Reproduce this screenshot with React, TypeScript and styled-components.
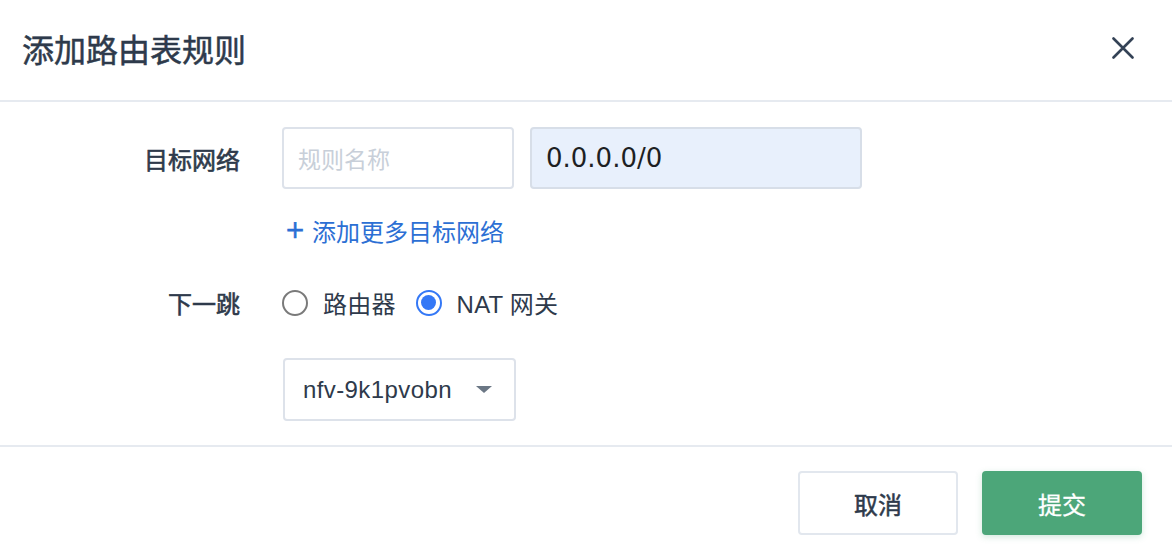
import styled, { createGlobalStyle } from "styled-components";

const GlobalStyle = createGlobalStyle`
  html, body {
    margin: 0;
    padding: 0;
    background: #ffffff;
  }
  body {
    font-family: "Liberation Sans", "Noto Sans CJK SC", sans-serif;
    color: #2e3a4b;
  }
  * {
    box-sizing: border-box;
  }
`;

export default function App() {
  return (
    <>
      <GlobalStyle />
      <Dialog>
        <Header>
          <Title>添加路由表规则</Title>
          <CloseButton aria-label="关闭">
            <svg width="22" height="22" viewBox="0 0 22 22">
              <path
                d="M1.5 1.5 L20.5 20.5 M20.5 1.5 L1.5 20.5"
                stroke="#344256"
                strokeWidth="2.6"
                strokeLinecap="round"
              />
            </svg>
          </CloseButton>
        </Header>

        <Body>
          <FormRow>
            <Label>目标网络</Label>
            <Fields>
              <TextInput placeholder="规则名称" readOnly />
              <CidrInput value="0.0.0.0/0" readOnly />
            </Fields>
          </FormRow>

          <LinkRow>
            <AddLink>
              <Plus>+</Plus>添加更多目标网络
            </AddLink>
          </LinkRow>

          <RadioRow>
            <Label>下一跳</Label>
            <RadioGroup>
              <RadioOption>
                <RadioCircle />
                路由器
              </RadioOption>
              <RadioOption>
                <RadioCircle $checked />
                NAT 网关
              </RadioOption>
            </RadioGroup>
          </RadioRow>

          <SelectRow>
            <Select>
              <span>nfv-9k1pvobn</span>
              <Caret />
            </Select>
          </SelectRow>
        </Body>

        <Footer>
          <Button>取消</Button>
          <Button $primary>提交</Button>
        </Footer>
      </Dialog>
    </>
  );
}

const Dialog = styled.div`
  width: 1172px;
  height: 552px;
  display: flex;
  flex-direction: column;
  background: #ffffff;
`;

const Header = styled.div`
  height: 102px;
  padding: 0 38px 4px 22px;
  display: flex;
  align-items: center;
  justify-content: space-between;
  border-bottom: 2px solid #e6eaf0;
`;

const Title = styled.h1`
  margin: 0;
  font-family: "Noto Sans CJK SC", sans-serif;
  font-size: 32px;
  font-weight: 400;
  -webkit-text-stroke: 0.5px #2e3a4b;
  color: #2e3a4b;
`;

const CloseButton = styled.button`
  border: none;
  background: none;
  padding: 0;
  width: 22px;
  height: 22px;
  display: flex;
  cursor: pointer;
`;

const Body = styled.div`
  padding: 25px 0 24px;
  border-bottom: 2px solid #e6eaf0;
`;

const FormRow = styled.div`
  display: grid;
  grid-template-columns: 240px auto;
  column-gap: 42px;
  align-items: center;
`;

const Label = styled.div`
  text-align: right;
  font-family: "Noto Sans CJK SC", sans-serif;
  font-size: 24px;
  font-weight: 400;
  -webkit-text-stroke: 0.6px #2e3a4b;
  color: #2e3a4b;
`;

const Fields = styled.div`
  display: flex;
  gap: 16px;
`;

const TextInput = styled.input`
  width: 232px;
  height: 62px;
  padding: 0 14px;
  border: 2px solid #dde2ea;
  border-radius: 4px;
  background: #ffffff;
  font-family: "Noto Sans CJK SC", sans-serif;
  font-size: 23px;
  outline: none;
  &::placeholder {
    color: #c8cfd9;
  }
`;

const CidrInput = styled(TextInput)`
  width: 332px;
  background: #e8f0fc;
  border-color: #d7dee8;
  font-family: "DejaVu Sans", sans-serif;
  font-size: 26px;
  color: #1d1f23;
`;

const LinkRow = styled.div`
  padding-left: 285px;
  margin-top: 24px;
  height: 34px;
  display: flex;
  align-items: center;
`;

const AddLink = styled.a`
  display: flex;
  align-items: center;
  font-family: "Noto Sans CJK SC", sans-serif;
  font-size: 24px;
  color: #2c6fd4;
  cursor: pointer;
`;

const Plus = styled.span`
  font-family: "DejaVu Sans", sans-serif;
  font-size: 24px;
  font-weight: 400;
  -webkit-text-stroke: 0.6px #2c6fd4;
  margin-right: 7px;
  line-height: 1;
`;

const RadioRow = styled(FormRow)`
  margin-top: 38px;
  height: 34px;
`;

const RadioGroup = styled.div`
  display: flex;
  align-items: center;
  gap: 20px;
`;

const RadioOption = styled.label`
  display: flex;
  align-items: center;
  gap: 15px;
  font-family: "Liberation Sans", "Noto Sans CJK SC", sans-serif;
  font-size: 24px;
  letter-spacing: 0.2px;
  color: #2e3a4b;
  cursor: pointer;
`;

const RadioCircle = styled.span<{ $checked?: boolean }>`
  width: 26px;
  height: 26px;
  border-radius: 50%;
  border: 2px solid ${(p) => (p.$checked ? "#3478f6" : "#7a7a7a")};
  background: #ffffff;
  display: flex;
  align-items: center;
  justify-content: center;
  &::after {
    content: "";
    width: 15px;
    height: 15px;
    border-radius: 50%;
    background: ${(p) => (p.$checked ? "#3478f6" : "transparent")};
  }
`;

const SelectRow = styled.div`
  padding-left: 283px;
  margin-top: 39px;
`;

const Select = styled.div`
  width: 233px;
  height: 63px;
  padding: 0 22px 0 18px;
  display: flex;
  align-items: center;
  justify-content: space-between;
  border: 2px solid #dde2ea;
  border-radius: 4px;
  font-family: "Liberation Sans", sans-serif;
  font-size: 24px;
  letter-spacing: 0.4px;
  color: #2e3a4b;
`;

const Caret = styled.span`
  width: 0;
  height: 0;
  border-left: 8px solid transparent;
  border-right: 8px solid transparent;
  border-top: 7px solid #6b7785;
`;

const Footer = styled.div`
  flex: 1;
  display: flex;
  justify-content: flex-end;
  align-items: flex-start;
  gap: 24px;
  padding: 24px 30px 0 0;
`;

const Button = styled.button<{ $primary?: boolean }>`
  width: 160px;
  height: 64px;
  border-radius: 4px;
  border: 2px solid ${(p) => (p.$primary ? "#4ca679" : "#e2e7ee")};
  background: ${(p) => (p.$primary ? "#4ca679" : "#ffffff")};
  color: ${(p) => (p.$primary ? "#ffffff" : "#2e3a4b")};
  box-shadow: ${(p) => (p.$primary ? "0 2px 6px rgba(76, 166, 121, 0.25)" : "none")};
  font-family: "Noto Sans CJK SC", sans-serif;
  font-size: 24px;
  font-weight: 400;
  -webkit-text-stroke: ${(p) => (p.$primary ? "0.3px #ffffff" : "0.5px #2e3a4b")};
  cursor: pointer;
`;
